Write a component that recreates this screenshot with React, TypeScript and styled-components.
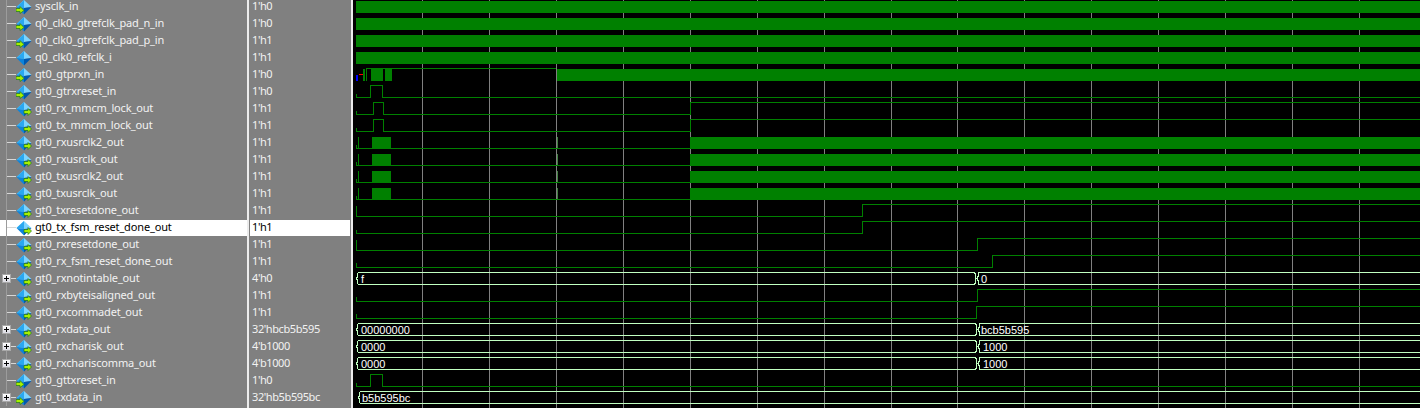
import styled, { createGlobalStyle } from "styled-components";

type Dir = "in" | "out" | "none";

type Wave =
  | { kind: "clock" }
  | { kind: "logic"; tick: number; edges: number[]; bars?: number[][]; glitch?: boolean; pre?: boolean }
  | { kind: "bus"; start: number; split?: number; labels: string[]; labelX: number[] }
  | { kind: "prxn" };

interface Signal {
  name: string;
  value: string;
  dir: Dir;
  expand?: boolean;
  selected?: boolean;
  wave: Wave;
}

const usrclk: Wave = { kind: "logic", tick: 8, edges: [], bars: [[372, 391], [690, 1420]], glitch: true, pre: true };
const mmcm: Wave = { kind: "logic", tick: 8, edges: [373, 383, 690] };
const pulse: Wave = { kind: "logic", tick: 8, edges: [370, 382] };

const signals: Signal[] = [
  { name: "sysclk_in", value: "1'h0", dir: "in", wave: { kind: "clock" } },
  { name: "q0_clk0_gtrefclk_pad_n_in", value: "1'h0", dir: "in", wave: { kind: "clock" } },
  { name: "q0_clk0_gtrefclk_pad_p_in", value: "1'h1", dir: "in", wave: { kind: "clock" } },
  { name: "q0_clk0_refclk_i", value: "1'h1", dir: "none", wave: { kind: "clock" } },
  { name: "gt0_gtprxn_in", value: "1'h0", dir: "in", wave: { kind: "prxn" } },
  { name: "gt0_gtrxreset_in", value: "1'h0", dir: "in", wave: pulse },
  { name: "gt0_rx_mmcm_lock_out", value: "1'h1", dir: "out", wave: mmcm },
  { name: "gt0_tx_mmcm_lock_out", value: "1'h1", dir: "out", wave: mmcm },
  { name: "gt0_rxusrclk2_out", value: "1'h1", dir: "out", wave: usrclk },
  { name: "gt0_rxusrclk_out", value: "1'h1", dir: "out", wave: usrclk },
  { name: "gt0_txusrclk2_out", value: "1'h1", dir: "out", wave: usrclk },
  { name: "gt0_txusrclk_out", value: "1'h1", dir: "out", wave: usrclk },
  { name: "gt0_txresetdone_out", value: "1'h1", dir: "out", wave: { kind: "logic", tick: 1, edges: [862] } },
  { name: "gt0_tx_fsm_reset_done_out", value: "1'h1", dir: "out", selected: true, wave: { kind: "logic", tick: 8, edges: [862] } },
  { name: "gt0_rxresetdone_out", value: "1'h1", dir: "out", wave: { kind: "logic", tick: 1, edges: [977] } },
  { name: "gt0_rx_fsm_reset_done_out", value: "1'h1", dir: "out", wave: { kind: "logic", tick: 7, edges: [992] } },
  { name: "gt0_rxnotintable_out", value: "4'h0", dir: "out", expand: true, wave: { kind: "bus", start: 356, split: 976.5, labels: ["f", "0"], labelX: [361, 981] } },
  { name: "gt0_rxbyteisaligned_out", value: "1'h1", dir: "out", wave: { kind: "logic", tick: 7, edges: [977] } },
  { name: "gt0_rxcommadet_out", value: "1'h1", dir: "out", wave: { kind: "logic", tick: 7, edges: [976] } },
  { name: "gt0_rxdata_out", value: "32'hbcb5b595", dir: "out", expand: true, wave: { kind: "bus", start: 356, split: 977.5, labels: ["00000000", "bcb5b595"], labelX: [361, 981] } },
  { name: "gt0_rxcharisk_out", value: "4'b1000", dir: "out", expand: true, wave: { kind: "bus", start: 356, split: 977.5, labels: ["0000", "1000"], labelX: [361, 983] } },
  { name: "gt0_rxchariscomma_out", value: "4'b1000", dir: "out", expand: true, wave: { kind: "bus", start: 356, split: 977.5, labels: ["0000", "1000"], labelX: [361, 983] } },
  { name: "gt0_gttxreset_in", value: "1'h0", dir: "in", wave: pulse },
  { name: "gt0_txdata_in", value: "32'hb5b595bc", dir: "in", expand: true, wave: { kind: "bus", start: 358, labels: ["b5b595bc"], labelX: [362] } },
];

const gridLines = [422, 489, 556, 623, 690, 757, 824, 891, 957, 1024, 1091, 1158, 1225, 1292, 1359];

const GREEN = "#008000";
const BUS = "#c0ffc0";

const GlobalStyle = createGlobalStyle`
  html, body {
    margin: 0;
    height: 408px;
    overflow: hidden;
    background: #808080;
  }
`;

const Page = styled.div`
  display: flex;
  width: 1420px;
  height: 408px;
  overflow: hidden;
  font-family: "Noto Sans", "Liberation Sans", sans-serif;
  font-size: 11px;
`;

const Column = styled.div<{ $width: number }>`
  flex: none;
  width: ${(p) => p.$width}px;
  height: 408px;
  overflow: hidden;
  background: #808080;
`;

const Sash = styled.div`
  flex: none;
  width: 2px;
  background: #ececec;
`;

const RowList = styled.div`
  margin-top: -2px;
`;

const NameRow = styled.div<{ $selected?: boolean }>`
  display: flex;
  align-items: center;
  box-sizing: border-box;
  height: 17px;
  border-top: 1px solid #808080;
  background: ${(p) => (p.$selected ? "#fff" : "transparent")};
  color: ${(p) => (p.$selected ? "#000" : "#f2f2f2")};
  white-space: nowrap;
`;

const ValueRow = styled(NameRow)`
  margin: 0 1px;
  padding: 0 0 3px 2px;
  letter-spacing: -0.4px;
`;

const TreeSlot = styled.div`
  position: relative;
  flex: none;
  width: 16px;
  height: 17px;
  margin-top: -1px;

  &::before {
    content: "";
    position: absolute;
    left: 6px;
    top: 0;
    bottom: 0;
    width: 1px;
    background: #9c9c9c;
  }

  &::after {
    content: "";
    position: absolute;
    left: 7px;
    right: 0;
    top: 8px;
    height: 1px;
    background: #d6d6d6;
  }
`;

const ExpandBox = styled.div`
  position: absolute;
  z-index: 1;
  left: 2px;
  top: 4px;
  box-sizing: border-box;
  width: 9px;
  height: 9px;
  border: 1px solid #a8a8a8;
  background: linear-gradient(#fff, #dcdce4);

  &::before {
    content: "";
    position: absolute;
    left: 1px;
    top: 3px;
    width: 5px;
    height: 1px;
    background: #000;
  }

  &::after {
    content: "";
    position: absolute;
    left: 3px;
    top: 1px;
    width: 1px;
    height: 5px;
    background: #000;
  }
`;

const IconSvg = styled.svg`
  flex: none;
  width: 16px;
  height: 16px;
  margin-right: 3px;
`;

const NameLabel = styled.span`
  padding-bottom: 3px;
  letter-spacing: -0.15px;
`;

const WavePanel = styled.div`
  flex: 1;
  height: 408px;
  background: #000;
`;

const Chart = styled.svg`
  display: block;
  shape-rendering: crispEdges;
`;

const BusLabel = styled.text`
  font-family: "Liberation Sans", Arial, sans-serif;
  font-size: 11px;
  fill: #fff;
  shape-rendering: auto;
`;

function SignalIcon({ dir }: { dir: Dir }) {
  return (
    <IconSvg viewBox="0 0 16 16">
      <polygon points="8,1 15.5,8 8,9 0.5,8" fill="#7cd4ff" />
      <polygon points="8,1 0.5,8 8,9" fill="#2aa8f0" />
      <polygon points="0.5,8 8,9 8,15.5" fill="#0c84dc" />
      <polygon points="15.5,8 8,9 8,15.5" fill="#0058b0" />
      {dir === "in" && (
        <polygon points="0,9.5 4,9.5 4,7.5 8,11.5 4,14.5 4,12.5 0,12.5" fill="#a8f000" stroke="#1c7a1c" strokeWidth="0.7" />
      )}
      {dir === "out" && (
        <polygon points="8,9.5 12,9.5 12,7.5 15.5,11 12,14.5 12,12.5 8,12.5" fill="#a8f000" stroke="#1c7a1c" strokeWidth="0.7" />
      )}
    </IconSvg>
  );
}

function LogicWave({ base, wave }: { base: number; wave: Extract<Wave, { kind: "logic" }> }) {
  const low = base + 12;
  let high = false;
  let d = `M356.5 ${base + wave.tick}.5 V${low}.5`;
  wave.edges.forEach((x) => {
    high = !high;
    d += ` H${x}.5 V${(high ? base : low)}.5`;
  });
  d += " H1420";
  return (
    <g>
      <path d={d} fill="none" stroke={GREEN} />
      {wave.pre && <path d={`M358.5 ${base + 1} V${low}`} stroke={GREEN} />}
      {wave.glitch && <path d={`M557.5 ${base + 1} V${low}`} stroke="#3f7f3f" />}
      {wave.bars?.map(([a, b]) => (
        <rect key={a} x={a} y={base + 1} width={b - a} height={12} fill={GREEN} />
      ))}
    </g>
  );
}

function busEdge(x: number, y: number, side: 1 | -1) {
  // bracket shape at the start or end of a bus value
  return `M${x + 2 * side} ${y}.5 L${x + side} ${y + 1}.5 V${y + 4}.5 L${x} ${y + 6}.5 L${x + side} ${y + 8}.5 V${y + 11}.5 L${x + 2 * side} ${y + 12}.5`;
}

function BusWave({ base, wave }: { base: number; wave: Extract<Wave, { kind: "bus" }> }) {
  const { start, split, labels, labelX } = wave;
  const parts = [busEdge(start + 0.5, base, 1)];
  if (split) {
    parts.push(busEdge(split - 0.5, base, -1));
    parts.push(busEdge(split + 0.5, base, 1));
    parts.push(`M${start + 2} ${base}.5 H${split - 2} M${start + 2} ${base + 12}.5 H${split - 2}`);
    parts.push(`M${split + 2} ${base}.5 H1420 M${split + 2} ${base + 12}.5 H1420`);
  } else {
    parts.push(`M${start + 2} ${base}.5 H1420 M${start + 2} ${base + 12}.5 H1420`);
  }
  return (
    <g>
      <path d={parts.join(" ")} fill="none" stroke={BUS} />
      {labels.map((label, i) => (
        <BusLabel key={i} x={labelX[i]} y={base + 11}>
          {label}
        </BusLabel>
      ))}
    </g>
  );
}

function PrxnWave({ base }: { base: number }) {
  const bars = [[363, 365], [366, 367], [371, 383], [385, 392], [557, 1420]];
  return (
    <g>
      <rect x={356} y={base + 7} width={2} height={6} fill="#0000ff" />
      <rect x={359} y={base + 6} width={4} height={1} fill="#ff0000" />
      <path d={`M366 ${base}.5 H556`} stroke={GREEN} />
      {bars.map(([a, b]) => (
        <rect key={a} x={a} y={base + 1} width={b - a} height={12} fill={GREEN} />
      ))}
    </g>
  );
}

function SignalWave({ index, wave }: { index: number; wave: Wave }) {
  const base = index * 17;
  switch (wave.kind) {
    case "clock":
      return <rect x={356} y={base + 1} width={1064} height={12} fill={GREEN} />;
    case "logic":
      return <LogicWave base={base} wave={wave} />;
    case "bus":
      return <BusWave base={base} wave={wave} />;
    default:
      return <PrxnWave base={base} />;
  }
}

export default function App() {
  return (
    <Page>
      <GlobalStyle />
      <Column $width={247}>
        <RowList>
          {signals.map((s) => (
            <NameRow key={s.name} $selected={s.selected}>
              <TreeSlot>{s.expand && <ExpandBox />}</TreeSlot>
              <SignalIcon dir={s.dir} />
              <NameLabel>{s.name}</NameLabel>
            </NameRow>
          ))}
        </RowList>
      </Column>
      <Sash />
      <Column $width={102}>
        <RowList>
          {signals.map((s) => (
            <ValueRow key={s.name} $selected={s.selected}>
              {s.value}
            </ValueRow>
          ))}
        </RowList>
      </Column>
      <Sash />
      <WavePanel>
        <Chart width={1067} height={408} viewBox="353 0 1067 408">
          {gridLines.map((x) => (
            <path key={x} d={`M${x}.5 0 V408`} stroke="#808080" />
          ))}
          {signals.map((s, i) => (
            <SignalWave key={s.name} index={i} wave={s.wave} />
          ))}
        </Chart>
      </WavePanel>
    </Page>
  );
}
